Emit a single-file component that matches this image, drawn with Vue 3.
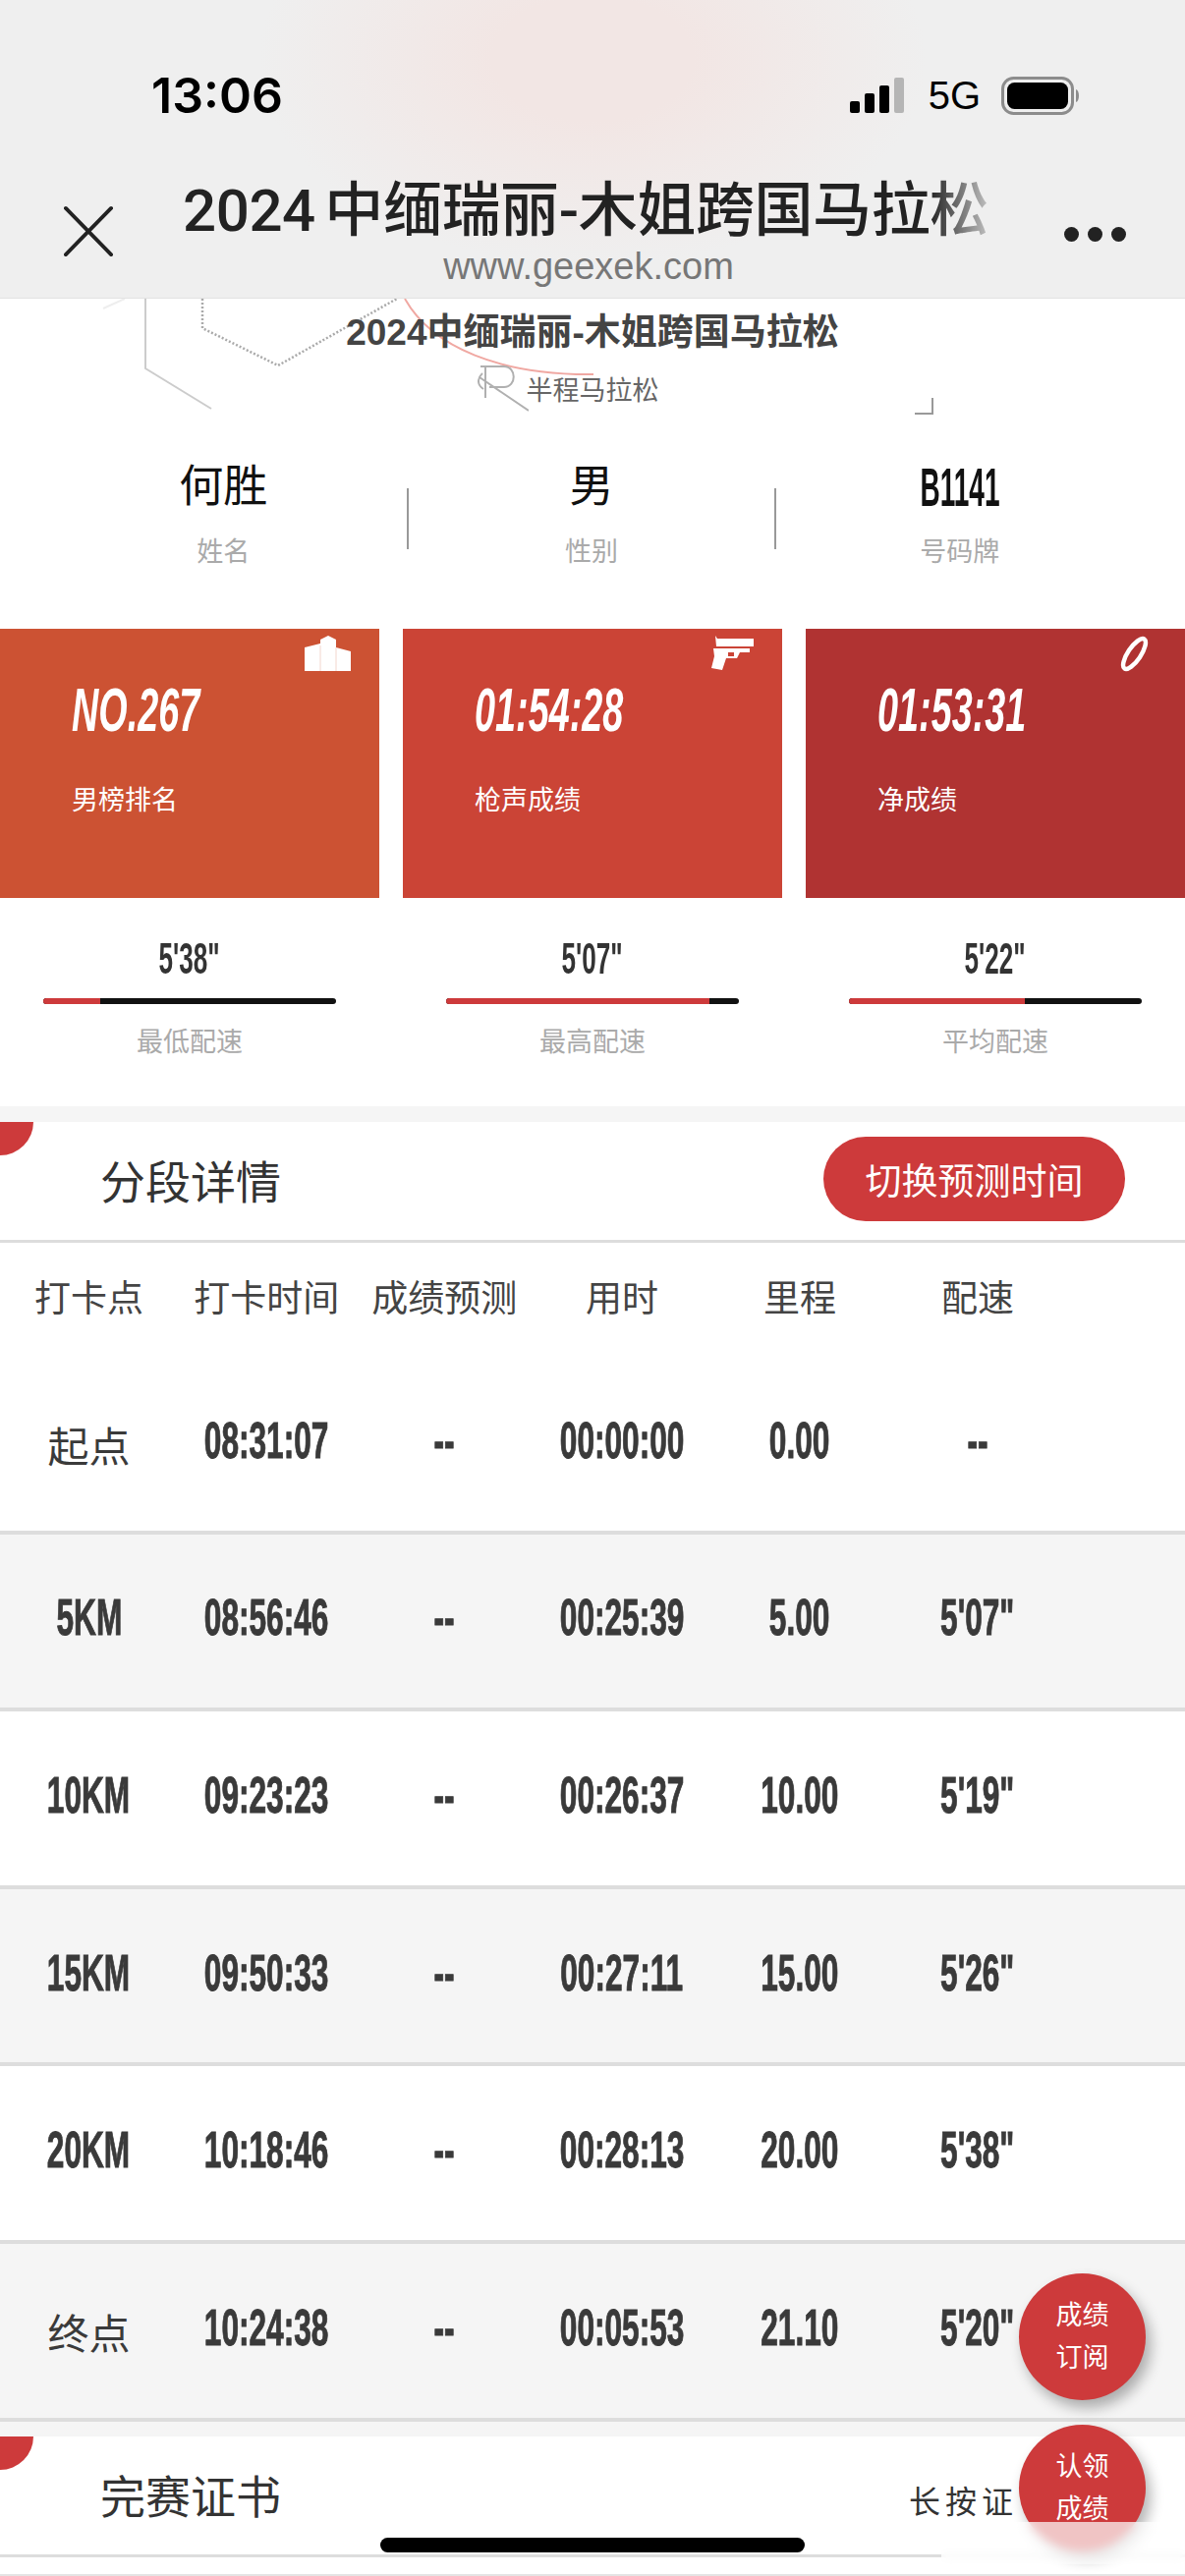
<script setup>
const infos = [
  { value: '何胜', label: '姓名' },
  { value: '男', label: '性别' },
  { value: 'B1141', label: '号码牌', num: true }
]

const cards = [
  { value: 'NO.267', label: '男榜排名', cls: 'c1', icon: 'building' },
  { value: '01:54:28', label: '枪声成绩', cls: 'c2', icon: 'gun' },
  { value: '01:53:31', label: '净成绩', cls: 'c3', icon: 'ring' }
]

const paces = [
  { value: `5'38"`, label: '最低配速', pct: 19.6 },
  { value: `5'07"`, label: '最高配速', pct: 90 },
  { value: `5'22"`, label: '平均配速', pct: 60 }
]

const heads = ['打卡点', '打卡时间', '成绩预测', '用时', '里程', '配速']

const rows = [
  { name: '起点', cn: true, time: '08:31:07', used: '00:00:00', km: '0.00', pace: '--' },
  { name: '5KM', time: '08:56:46', used: '00:25:39', km: '5.00', pace: `5'07"` },
  { name: '10KM', time: '09:23:23', used: '00:26:37', km: '10.00', pace: `5'19"` },
  { name: '15KM', time: '09:50:33', used: '00:27:11', km: '15.00', pace: `5'26"` },
  { name: '20KM', time: '10:18:46', used: '00:28:13', km: '20.00', pace: `5'38"` },
  { name: '终点', cn: true, time: '10:24:38', used: '00:05:53', km: '21.10', pace: `5'20"` }
]
</script>

<template>
  <div class="page">
    <header class="topbar">
      <div class="status">
        <span class="clock">13:06</span>
        <div class="status-right">
          <svg class="signal" width="57" height="36" viewBox="0 0 57 36">
            <rect x="0" y="24" width="10" height="12" rx="2" fill="#000" />
            <rect x="15" y="16" width="10" height="20" rx="2" fill="#000" />
            <rect x="30" y="8" width="10" height="28" rx="2" fill="#000" />
            <rect x="45" y="0" width="10" height="36" rx="2" fill="#b5b5b5" />
          </svg>
          <span class="net">5G</span>
          <svg class="battery" width="81" height="39" viewBox="0 0 81 39">
            <rect x="1.5" y="1.5" width="71" height="36" rx="11" fill="none" stroke="#8c8c8c" stroke-width="3" />
            <rect x="6" y="6" width="62" height="27" rx="7.5" fill="#000" />
            <path d="M76 13 C80 14 80 25 76 26 Z" fill="#8c8c8c" />
          </svg>
        </div>
      </div>
      <div class="navline">
        <svg class="close" width="52" height="53" viewBox="0 0 52 53">
          <path d="M2 2 L50 51 M50 2 L2 51" stroke="#222" stroke-width="4" stroke-linecap="round" />
        </svg>
        <div class="nav-mid">
          <div class="nav-title">2024 中缅瑞丽-木姐跨国马拉松</div>
          <div class="nav-url">www.geexek.com</div>
        </div>
        <div class="dots"><i></i><i></i><i></i></div>
      </div>
    </header>

    <section class="hero">
      <svg class="hero-art" width="1206" height="136" viewBox="0 0 1206 136">
        <path d="M105 10 L127 0" stroke="#eee" stroke-width="2" fill="none" />
        <path d="M148 0 V71 L215 112" stroke="#ccc" stroke-width="2" fill="none" />
        <path d="M206 0 V30 L283 68 L404 0" stroke="#aaa" stroke-width="2.5" stroke-dasharray="2 2" fill="none" />
        <path d="M412 0 C440 50 510 78 604 77" stroke="#f0a8a2" stroke-width="2" fill="none" />
        <path d="M931 117 H949 V101" stroke="#999" stroke-width="2" fill="none" />
      </svg>
      <h1 class="hero-title">2024中缅瑞丽-木姐跨国马拉松</h1>
      <div class="hero-sub">
        <svg width="52" height="47" viewBox="0 0 52 47">
          <path d="M3 1 H27 C40 1 40 22 27 22 H12 M2 12 L52 46 M8 1 V33 M5 8 C-1 14 0 20 6 24" stroke="#b0b0b0" stroke-width="2" fill="none" />
        </svg>
        <span>半程马拉松</span>
      </div>
    </section>

    <section class="info">
      <template v-for="(item, i) in infos" :key="item.label">
        <i v-if="i > 0" class="info-line"></i>
        <div class="info-item">
          <div class="info-value">
            <span :class="{ narrow: item.num }">{{ item.value }}</span>
          </div>
          <div class="info-label">{{ item.label }}</div>
        </div>
      </template>
    </section>

    <section class="cards">
      <div v-for="card in cards" :key="card.label" class="card" :class="card.cls">
        <svg v-if="card.icon === 'building'" class="card-icon" width="48" height="36" viewBox="0 0 48 36">
          <path d="M0 12 L16 8 V4 L24 0 L32 4 V12 L47 16 V36 H0 Z" fill="#fff" />
          <path d="M16 10 V36 M32 12 V36" stroke="#f3d6cd" stroke-width="1" />
        </svg>
        <svg v-else-if="card.icon === 'gun'" class="card-icon" width="44" height="35" viewBox="0 0 44 35">
          <path d="M5 0 L7 3 H44 V11 H6 Z" fill="#fff" />
          <path d="M3 13 H40 V17 H30 L27 23 H16 L12 35 L1 33 L4 21 Z" fill="#fff" />
          <rect x="18" y="17" width="6" height="4" fill="#cb4436" />
        </svg>
        <svg v-else class="card-icon" width="33" height="37" viewBox="0 0 33 37">
          <ellipse cx="16.5" cy="18.5" rx="6.5" ry="18" transform="rotate(34 16.5 18.5)" fill="none" stroke="#fff" stroke-width="4.5" />
        </svg>
        <div class="card-value"><span>{{ card.value }}</span></div>
        <div class="card-label">{{ card.label }}</div>
      </div>
    </section>

    <section class="paces">
      <div v-for="p in paces" :key="p.label" class="pace">
        <div class="pace-value"><span class="narrow">{{ p.value }}</span></div>
        <div class="pace-bar">
          <div class="pace-fill" :style="{ width: p.pct + '%' }"></div>
        </div>
        <div class="pace-label">{{ p.label }}</div>
      </div>
    </section>

    <div class="band"></div>

    <section class="sec-head">
      <i class="corner"></i>
      <h2>分段详情</h2>
      <button class="switch">切换预测时间</button>
    </section>

    <section class="table">
      <div class="tr th">
        <div v-for="h in heads" :key="h">{{ h }}</div>
      </div>
      <div v-for="(r, i) in rows" :key="r.name" class="tr td" :class="{ odd: i % 2 === 1 }">
        <div>
          <span v-if="r.cn" class="cn">{{ r.name }}</span>
          <span v-else class="narrow">{{ r.name }}</span>
        </div>
        <div><span class="narrow">{{ r.time }}</span></div>
        <div><span class="narrow">--</span></div>
        <div><span class="narrow">{{ r.used }}</span></div>
        <div><span class="narrow">{{ r.km }}</span></div>
        <div><span class="narrow">{{ r.pace }}</span></div>
      </div>
    </section>

    <div class="band short"></div>

    <section class="sec-head cert">
      <i class="corner"></i>
      <h2>完赛证书</h2>
      <span class="hint">长按证</span>
    </section>
    <div class="last-line"></div>

    <div class="fab fab1">成绩<br>订阅</div>
    <div class="fab fab2">认领<br>成绩</div>
    <div class="smudge"></div>
    <div class="home"></div>
  </div>
</template>

<style scoped>
.page {
  position: relative;
  width: 1206px;
  height: 2622px;
  overflow: hidden;
  background: #fff;
  font-family: "Liberation Sans", "Noto Sans CJK SC", sans-serif;
  color: #333;
}

/* 顶栏 */
.topbar {
  height: 304px;
  box-sizing: border-box;
  border-bottom: 1px solid #e2e2e2;
  background: radial-gradient(ellipse 340px 210px at 50% 60px, #f2e6e4 30%, #efefef 100%);
}
.status {
  display: flex;
  justify-content: space-between;
  align-items: center;
  height: 78px;
  padding: 58px 106px 0 154px;
}
.clock {
  font-family: Inter, "Liberation Sans", sans-serif;
  font-size: 50px;
  font-weight: 600;
  color: #000;
}
.status-right {
  display: flex;
  align-items: center;
}
.net {
  margin: 0 21px 0 23px;
  font-size: 40px;
  color: #000;
}
.navline {
  display: flex;
  justify-content: space-between;
  padding: 37px 60px 0 65px;
}
.close {
  margin-top: 36px;
}
.nav-mid {
  width: 826px;
  margin-left: 71px;
  margin-right: 71px;
  text-align: center;
}
.nav-title {
  width: 826px;
  white-space: nowrap;
  text-align: left;
  font-family: Roboto, "Noto Sans CJK SC", sans-serif;
  font-size: 60px;
  line-height: 84px;
  font-weight: 500;
  word-spacing: -5px;
  letter-spacing: -0.4px;
  color: #222;
  -webkit-mask-image: linear-gradient(to right, #000 92%, rgba(0, 0, 0, 0.15) 100%);
  mask-image: linear-gradient(to right, #000 92%, rgba(0, 0, 0, 0.15) 100%);
}
.nav-url {
  margin-top: -8px;
  font-size: 38px;
  line-height: 44px;
  color: #777;
}
.dots {
  display: flex;
  gap: 9px;
  margin-top: 58px;
  height: 16px;
}
.dots i {
  display: block;
  width: 15px;
  height: 15px;
  border-radius: 50%;
  background: #222;
}

/* 赛事标题 */
.hero {
  position: relative;
  height: 136px;
  box-sizing: border-box;
  padding-top: 13px;
  text-align: center;
}
.hero-art {
  position: absolute;
  left: 0;
  top: 0;
}
.hero-title {
  position: relative;
  margin: 0;
  font-size: 37px;
  line-height: 44px;
  font-weight: 700;
  color: #444;
}
.hero-sub {
  position: relative;
  display: flex;
  justify-content: center;
  align-items: center;
  height: 47px;
  margin-top: 11px;
  padding-right: 50px;
  font-size: 27px;
  color: #666;
}
.hero-sub svg {
  margin-right: -2px;
}

/* 姓名 性别 号码牌 */
.info {
  display: flex;
  height: 200px;
  padding: 0 43px 0 41px;
}
.info-item {
  flex: 1;
  text-align: center;
  padding-top: 26px;
}
.info-line {
  width: 2px;
  height: 62px;
  margin-top: 57px;
  background: #999;
}
.info-value {
  height: 60px;
  font-size: 45px;
  line-height: 60px;
  color: #111;
}
.info-value .narrow {
  font-size: 56px;
  color: #111;
  transform: scaleX(0.5);
}
.info-label {
  margin-top: 18px;
  font-size: 27px;
  line-height: 36px;
  color: #aaa;
}
.narrow {
  display: inline-block;
  font-weight: 700;
  white-space: nowrap;
  transform: scaleX(0.62);
}

/* 成绩卡片 */
.cards {
  display: grid;
  grid-template-columns: repeat(3, 1fr);
  gap: 24px;
}
.card {
  position: relative;
  height: 274px;
  box-sizing: border-box;
  padding: 44px 0 0 73px;
  color: #fff;
}
.c1 { background: #cc5233; }
.c2 { background: #cb4436; }
.c3 { background: #b03332; }
.card-icon {
  position: absolute;
  top: 7px;
  right: 28px;
}
.c2 .card-icon { right: 29px; }
.c3 .card-icon { right: 35px; }
.card-value {
  height: 76px;
  font-size: 63px;
  line-height: 76px;
  font-weight: 700;
  font-style: italic;
}
.card-value span {
  display: inline-block;
  transform: scaleX(0.6);
  transform-origin: left center;
  white-space: nowrap;
}
.card-label {
  margin-top: 37px;
  font-size: 27px;
  line-height: 36px;
}

/* 配速 */
.paces {
  display: grid;
  grid-template-columns: repeat(3, 1fr);
  gap: 24px;
  height: 212px;
}
.pace {
  padding: 37px 44px 0;
  text-align: center;
}
.pace-value {
  height: 50px;
  font-size: 45px;
  line-height: 50px;
  color: #333;
}
.pace-value .narrow {
  transform: scaleX(0.58);
}
.pace-bar {
  height: 6px;
  margin-top: 15px;
  overflow: hidden;
  border-radius: 3px;
  background: #111;
}
.pace-fill {
  height: 100%;
  background: #cd3a3b;
}
.pace-label {
  margin-top: 21px;
  font-size: 27px;
  line-height: 36px;
  color: #aaa;
}

.band {
  height: 16px;
  background: #f5f5f5;
}
.band.short {
  height: 15px;
}

/* 分段详情 */
.sec-head {
  position: relative;
  display: flex;
  justify-content: space-between;
  align-items: center;
  height: 123px;
  box-sizing: border-box;
  padding: 0 61px 0 102px;
  border-bottom: 3px solid #ddd;
}
.sec-head h2 {
  margin: 0 0 4px;
  font-size: 46px;
  font-weight: 400;
  color: #333;
}
.corner {
  position: absolute;
  left: 0;
  top: 0;
  width: 34px;
  height: 34px;
  border-bottom-right-radius: 34px;
  background: #cd3a3b;
}
.switch {
  width: 307px;
  height: 86px;
  margin-top: -4px;
  border: none;
  border-radius: 43px;
  background: #cd3a3b;
  color: #fff;
  font-family: inherit;
  font-size: 37px;
}
.hint {
  position: absolute;
  left: 925px;
  top: 41px;
  font-size: 32px;
  letter-spacing: 5px;
  white-space: nowrap;
  color: #333;
}

/* 分段表格 */
.tr {
  display: grid;
  grid-template-columns: repeat(6, 15%);
  text-align: center;
}
.th {
  height: 116px;
  padding-top: 33px;
  box-sizing: border-box;
  font-size: 37px;
  line-height: 50px;
  color: #444;
}
.td {
  height: 180.6px;
  box-sizing: border-box;
  border-bottom: 4px solid #ddd;
  align-items: center;
  font-size: 51px;
  color: #3a3a3a;
}
.td > div {
  display: flex;
  justify-content: center;
  align-items: center;
}
.td.odd {
  background: #f5f5f5;
}
.td .narrow {
  margin-top: -6px;
  -webkit-text-stroke: 1px #3a3a3a;
}
.cn {
  font-size: 42px;
}

.last-line {
  height: 3px;
  margin-top: 17px;
  background: #e4e4e4;
}

/* 浮动按钮 */
.fab {
  position: absolute;
  left: 1037px;
  width: 129px;
  height: 129px;
  box-sizing: border-box;
  padding-top: 22px;
  border-radius: 50%;
  background: #cd3a3b;
  box-shadow: 5px 8px 14px rgba(0, 0, 0, 0.3);
  color: #fff;
  font-size: 27px;
  line-height: 43px;
  text-align: center;
}
.fab1 { top: 2314px; }
.fab2 { top: 2468px; }
.smudge {
  position: absolute;
  left: 958px;
  top: 2567px;
  width: 248px;
  height: 43px;
  background: rgba(255, 255, 255, 0.7);
  -webkit-backdrop-filter: blur(5px);
  backdrop-filter: blur(5px);
}
.home {
  position: absolute;
  left: 387px;
  top: 2583px;
  width: 432px;
  height: 15px;
  border-radius: 8px;
  background: #000;
}
</style>
